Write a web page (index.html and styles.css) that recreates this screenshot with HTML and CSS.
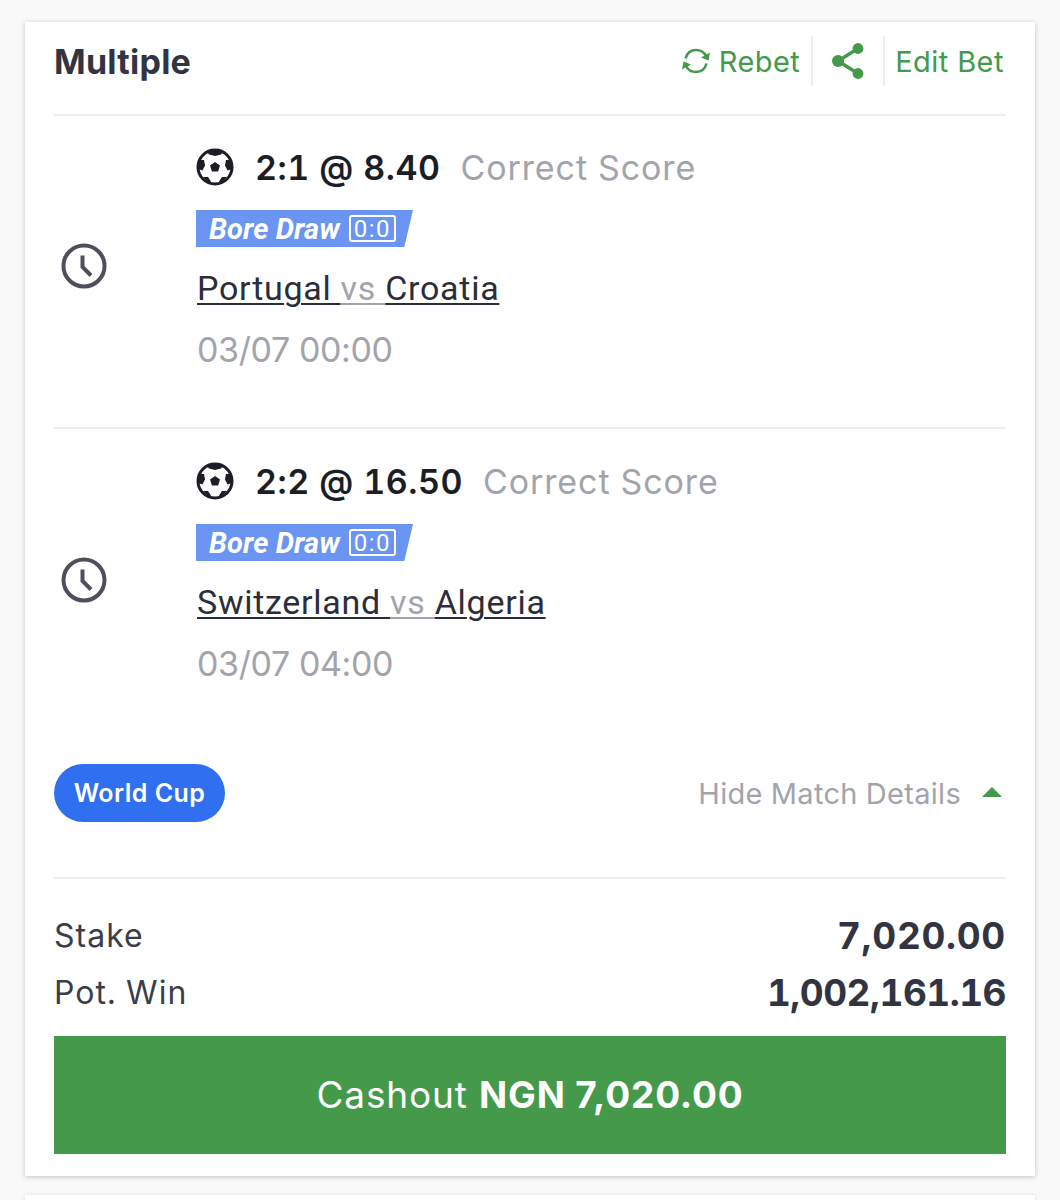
FILE: index.html
```html
<!DOCTYPE html>
<html lang="en">
<head>
<meta charset="utf-8">
<title>Multiple</title>
<link rel="stylesheet" href="styles.css">
</head>
<body>
<svg class="defs" width="0" height="0" aria-hidden="true">
  <symbol id="ball" viewBox="0 0 38 38">
    <circle cx="19" cy="19" r="17" fill="#fff" stroke="#1c1e26" stroke-width="3"/>
    <path d="M11 4 Q19 0.5 27 4 L25 6.6 L19 8 L13 6.6 Z" fill="#1c1e26"/>
    <path d="M4 12 L8 12 L9 17.5 L6.4 22.5 L2 21 Z" fill="#1c1e26"/>
    <path d="M34 12 L30 12 L29 17.5 L31.6 22.5 L36 21 Z" fill="#1c1e26"/>
    <path d="M7 29 L12 29 L15 33.5 L13 35 Z" fill="#1c1e26"/>
    <path d="M31 29 L26 29 L23 33.5 L25 35 Z" fill="#1c1e26"/>
    <path d="M19 14 L24 17.6 L22.1 23.4 L15.9 23.4 L14 17.6 Z" fill="#1c1e26"/>
  </symbol>
  <symbol id="clock" viewBox="0 0 46 46">
    <circle cx="23" cy="23" r="20.5" fill="none" stroke="#4d505a" stroke-width="4"/>
    <path d="M21.5 12.5 V24 L30 32.5" fill="none" stroke="#4d505a" stroke-width="4"/>
  </symbol>
</svg>
<main class="card">
  <header class="head">
    <h1 class="title">Multiple</h1>
    <div class="actions">
      <a class="action rebet">
        <svg class="rebet-icon" viewBox="0 0 30 28" aria-hidden="true">
          <path d="M4.5 11.5 C6 6 10 3 15 3 C19.5 3 23 5 25 9" fill="none" stroke="#45994a" stroke-width="2.6"/>
          <path d="M29 5.5 L27.5 13.5 L20 10.5 Z" fill="#45994a"/>
          <path d="M25.5 16.5 C24 22 20 25 15 25 C10.5 25 7 23 5 19" fill="none" stroke="#45994a" stroke-width="2.6"/>
          <path d="M1 22.5 L2.5 14.5 L10 17.5 Z" fill="#45994a"/>
        </svg>
        <span>Rebet</span>
      </a>
      <a class="share" aria-label="Share">
        <svg viewBox="0 0 34 38" width="34" height="38" aria-hidden="true">
          <path d="M27 6.5 L7 19 L27 31.5" fill="none" stroke="#45994a" stroke-width="3.4"/>
          <circle cx="27" cy="6.5" r="5.4" fill="#45994a"/>
          <circle cx="7" cy="19" r="6" fill="#45994a"/>
          <circle cx="27" cy="31.5" r="5.4" fill="#45994a"/>
        </svg>
      </a>
      <a class="action edit">Edit Bet</a>
    </div>
  </header>

  <section class="leg">
    <div class="leg-status"><svg class="clock" aria-hidden="true"><use href="#clock"/></svg></div>
    <div class="leg-body">
      <div class="pick">
        <svg class="ball" aria-hidden="true"><use href="#ball"/></svg>
        <strong class="score">2:1 @ 8.40</strong>
        <span class="market">Correct Score</span>
      </div>
      <div class="promo"><em>Bore Draw</em><span class="promo-score">0:0</span></div>
      <div class="teams"><span>Portugal </span><span class="vs">vs </span><span>Croatia</span></div>
      <div class="date">03/07 00:00</div>
    </div>
  </section>

  <section class="leg">
    <div class="leg-status"><svg class="clock" aria-hidden="true"><use href="#clock"/></svg></div>
    <div class="leg-body">
      <div class="pick">
        <svg class="ball" aria-hidden="true"><use href="#ball"/></svg>
        <strong class="score">2:2 @ 16.50</strong>
        <span class="market">Correct Score</span>
      </div>
      <div class="promo"><em>Bore Draw</em><span class="promo-score">0:0</span></div>
      <div class="teams"><span>Switzerland </span><span class="vs">vs </span><span>Algeria</span></div>
      <div class="date">03/07 04:00</div>
    </div>
  </section>

  <div class="details-row">
    <span class="pill">World Cup</span>
    <a class="toggle">Hide Match Details<i class="caret"></i></a>
  </div>

  <div class="totals">
    <div class="total stake"><span>Stake</span><b>7,020.00</b></div>
    <div class="total win"><span>Pot. Win</span><b>1,002,161.16</b></div>
  </div>

  <button class="cashout" type="button">Cashout <b>NGN 7,020.00</b></button>
</main>
<div class="next-card"></div>
</body>
</html>
```

FILE: styles.css
```css
* { box-sizing: border-box; }
html, body { margin: 0; height: 1200px; overflow: hidden; }
body {
  background: #f9f9f9;
  padding: 22px 25px 0;
  font-family: Inter, "Liberation Sans", sans-serif;
  font-variant-numeric: tabular-nums;
  color: #2b2e38;
}
.defs { position: absolute; }
.card {
  height: 1154px;
  padding: 0 29px;
  background: #fff;
  box-shadow: 0 1px 5px rgba(0, 0, 0, .22);
  display: flex;
  flex-direction: column;
}
.next-card {
  height: 40px;
  margin-top: 19px;
  background: #fff;
  box-shadow: 0 0 4px rgba(0, 0, 0, .12);
}
.head {
  height: 94px;
  flex: none;
  display: flex;
  align-items: center;
  justify-content: space-between;
  padding-bottom: 14px;
  border-bottom: 2px solid #eeeef0;
}
.title { margin: 2px 0 0; font-size: 34px; line-height: 40px; font-weight: 700; color: #323541; letter-spacing: .25px; }
.actions { display: flex; align-items: center; color: #45994a; font-size: 29px; margin-right: 2px; }
.action { display: flex; align-items: center; letter-spacing: .4px; }
.rebet { height: 50px; padding-right: 11px; border-right: 2px solid #eeeef0; }
.rebet-icon { width: 30px; height: 28px; margin-right: 8px; }
.share {
  display: flex;
  align-items: center;
  height: 50px;
  padding: 0 18px;
  border-right: 2px solid #eeeef0;
}
.edit { margin-left: 10px; letter-spacing: .5px; }
.leg {
  height: 314px;
  flex: none;
  display: flex;
  border-bottom: 2px solid #eeeef0;
}
.head + .leg { height: 313px; }
.leg + .leg { border-bottom: 0; }
.leg-status { width: 143px; flex: none; padding: 127px 0 0 7px; }
.leg + .leg .leg-status { padding-top: 128px; }
.clock { display: block; width: 46px; height: 46px; }
.leg-body { padding-top: 29px; }
.leg + .leg .leg-body { padding-top: 30px; }
.pick { display: flex; align-items: center; height: 44px; }
.ball { width: 38px; height: 38px; margin-right: 21px; margin-left: -1px; }
.score { font-size: 34px; font-weight: 600; color: #1c1e26; margin-right: 20px; letter-spacing: .5px; }
.market { font-size: 34px; font-weight: 400; color: #a3a4ab; letter-spacing: .9px; }
.promo {
  width: 217px;
  height: 37px;
  margin-top: 21px;
  margin-left: -1px;
  padding-left: 13px;
  display: flex;
  align-items: center;
  color: #fff;
  background: #6a95f2;
  clip-path: polygon(0 0, 100% 0, 96% 100%, 0 100%);
  font-family: Roboto, sans-serif;
}
.promo em { font-size: 29px; font-weight: 700; font-style: italic; letter-spacing: .1px; }
.promo-score {
  margin-left: 9px;
  width: 47px;
  height: 27px;
  border: 2px solid #fff;
  border-radius: 3px;
  font-size: 24px;
  line-height: 24px;
  text-align: center;
  letter-spacing: 1.5px;
}
.teams {
  margin-top: 20px;
  height: 42px;
  font-family: Roboto, sans-serif;
  font-size: 34px;
  line-height: 42px;
  letter-spacing: .72px;
  color: #2b2e38;
  white-space: pre;
}
.teams span { text-decoration: underline; text-decoration-thickness: 2px; text-underline-offset: 3px; }
.teams .vs { color: #a3a4ab; }
.date { margin-top: 21px; font-size: 34px; line-height: 40px; color: #a3a4ab; letter-spacing: -.4px; font-variant-numeric: normal; }
.details-row {
  flex: none;
  height: 136px;
  padding-top: 21px;
  display: flex;
  align-items: flex-start;
  justify-content: space-between;
  border-bottom: 2px solid #eeeef0;
}
.pill {
  width: 171px;
  height: 58px;
  border-radius: 29px;
  background: #2f6ff0;
  color: #fff;
  font-size: 25px;
  font-weight: 600;
  line-height: 58px;
  text-align: center;
  letter-spacing: .4px;
}
.toggle {
  display: flex;
  align-items: center;
  height: 58px;
  color: #a3a4ab;
  font-size: 29px;
  letter-spacing: .3px;
}
.caret {
  width: 0;
  height: 0;
  margin: 0 4px 2px 21px;
  border-left: 10px solid transparent;
  border-right: 10px solid transparent;
  border-bottom: 10px solid #45994a;
}
.totals { padding-top: 28px; }
.total {
  display: flex;
  align-items: center;
  justify-content: space-between;
  height: 57px;
  font-size: 32px;
  letter-spacing: 1px;
  color: #3b3e49;
}
.total b { font-size: 37px; font-weight: 700; color: #323541; }
.stake b { letter-spacing: .7px; }
.win b { letter-spacing: -.5px; }
.cashout {
  flex: none;
  height: 118px;
  margin-top: 15px;
  padding: 0 0 2px;
  border: 0;
  background: #45994a;
  color: #fff;
  font: 400 37px Inter, sans-serif;
  letter-spacing: .85px;
}
.cashout b { font-weight: 700; }
```
